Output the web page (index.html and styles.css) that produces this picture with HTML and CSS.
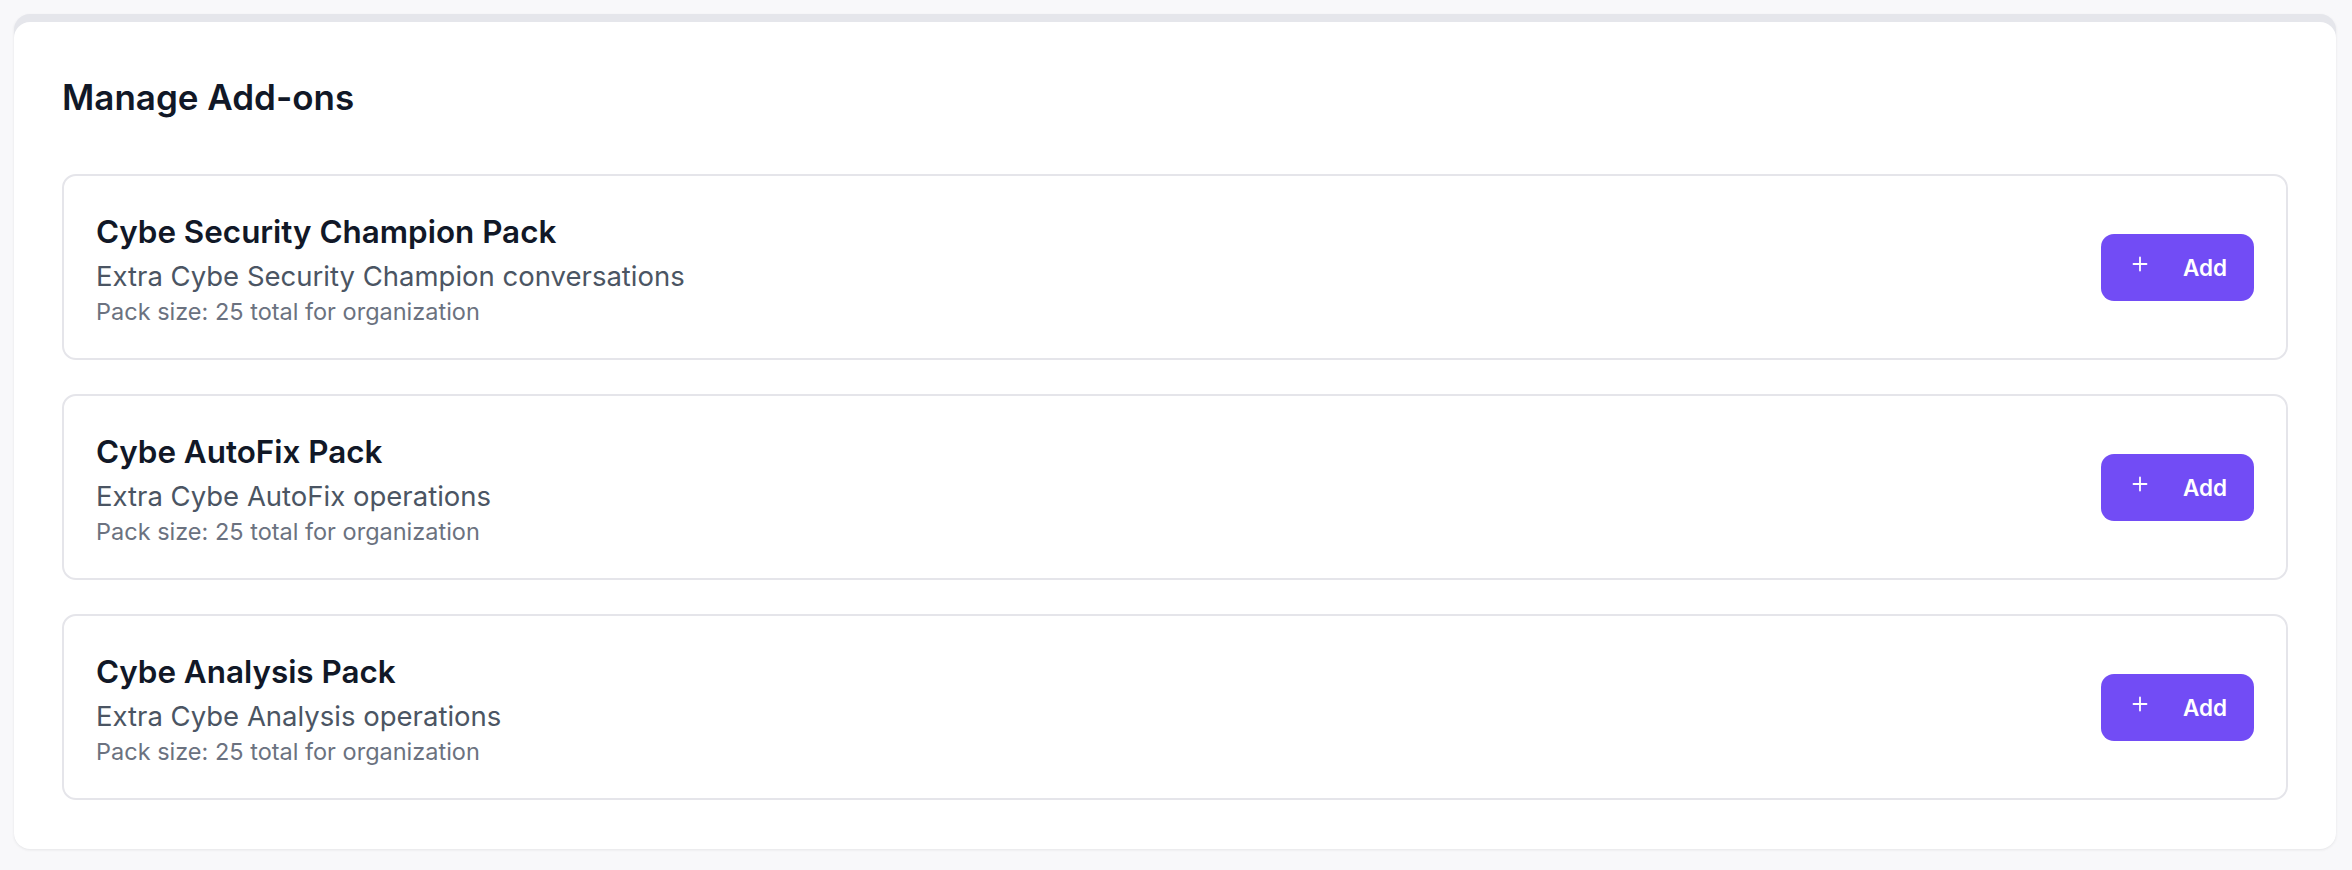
FILE: index.html
```html
<!DOCTYPE html>
<html lang="en">
<head>
<meta charset="utf-8">
<title>Manage Add-ons</title>
<link rel="stylesheet" href="styles.css">
</head>
<body>
  <div class="shell">
    <section class="panel">
      <h1 class="panel-title">Manage Add-ons</h1>
      <div class="addon-list">
        <div class="addon">
          <div class="addon-info">
            <div class="addon-name">Cybe Security Champion Pack</div>
            <div class="addon-desc">Extra Cybe Security Champion conversations</div>
            <div class="addon-size">Pack size: 25 total for organization</div>
          </div>
          <button class="add-btn" type="button">
            <svg class="plus" viewBox="0 0 16 16" width="16" height="16" aria-hidden="true"><path d="M8 1.5v13M1.5 8h13" stroke="currentColor" stroke-width="1.8" stroke-linecap="round" fill="none"/></svg>
            <span>Add</span>
          </button>
        </div>
        <div class="addon">
          <div class="addon-info">
            <div class="addon-name">Cybe AutoFix Pack</div>
            <div class="addon-desc">Extra Cybe AutoFix operations</div>
            <div class="addon-size">Pack size: 25 total for organization</div>
          </div>
          <button class="add-btn" type="button">
            <svg class="plus" viewBox="0 0 16 16" width="16" height="16" aria-hidden="true"><path d="M8 1.5v13M1.5 8h13" stroke="currentColor" stroke-width="1.8" stroke-linecap="round" fill="none"/></svg>
            <span>Add</span>
          </button>
        </div>
        <div class="addon">
          <div class="addon-info">
            <div class="addon-name">Cybe Analysis Pack</div>
            <div class="addon-desc">Extra Cybe Analysis operations</div>
            <div class="addon-size">Pack size: 25 total for organization</div>
          </div>
          <button class="add-btn" type="button">
            <svg class="plus" viewBox="0 0 16 16" width="16" height="16" aria-hidden="true"><path d="M8 1.5v13M1.5 8h13" stroke="currentColor" stroke-width="1.8" stroke-linecap="round" fill="none"/></svg>
            <span>Add</span>
          </button>
        </div>
      </div>
    </section>
  </div>
</body>
</html>
```

FILE: styles.css
```css
* { box-sizing: border-box; }

html, body {
  margin: 0;
  padding: 0;
  background: #f8f8fa;
  font-family: Inter, "Noto Sans", "Liberation Sans", sans-serif;
  color: #111827;
}

.shell {
  padding: 14px 16px 20px 14px;
}

.panel {
  background: #e5e6eb;
  border-radius: 16px;
  padding-top: 8px;
  box-shadow: 0 1px 3px rgba(0, 0, 0, 0.08);
}

.panel > * {
  background: #ffffff;
}

.panel-title {
  margin: 0;
  padding: 55px 48px 56px;
  font-size: 35px;
  line-height: 41px;
  font-weight: 600;
  color: #111827;
  border-radius: 16px 16px 0 0;
}

.addon-list {
  display: flex;
  flex-direction: column;
  gap: 34px;
  padding: 0 48px 49px;
  border-radius: 0 0 16px 16px;
}

.addon {
  display: flex;
  align-items: center;
  justify-content: space-between;
  height: 186px;
  padding: 0 32px;
  border: 2px solid #e5e5ea;
  border-radius: 14px;
  background: #ffffff;
}

.addon-info {
  display: flex;
  flex-direction: column;
  padding-top: 6px;
}

.addon-name {
  font-size: 31.4px;
  line-height: 40px;
  font-weight: 600;
  color: #111827;
}

.addon-desc {
  margin-top: 6px;
  font-size: 27.5px;
  line-height: 36px;
  color: #4b5563;
}

.addon-size {
  margin-top: 2px;
  font-size: 23.5px;
  line-height: 32px;
  color: #6b7280;
}

.add-btn {
  display: flex;
  align-items: center;
  gap: 35px;
  height: 67px;
  padding: 0 27px 0 31px;
  border: none;
  border-radius: 13px;
  background: #724cf5;
  color: #ffffff;
  font-family: inherit;
  font-size: 22.5px;
  font-weight: 600;
  cursor: pointer;
}

.plus {
  width: 16px;
  height: 16px;
  margin-bottom: 6px;
}
```
